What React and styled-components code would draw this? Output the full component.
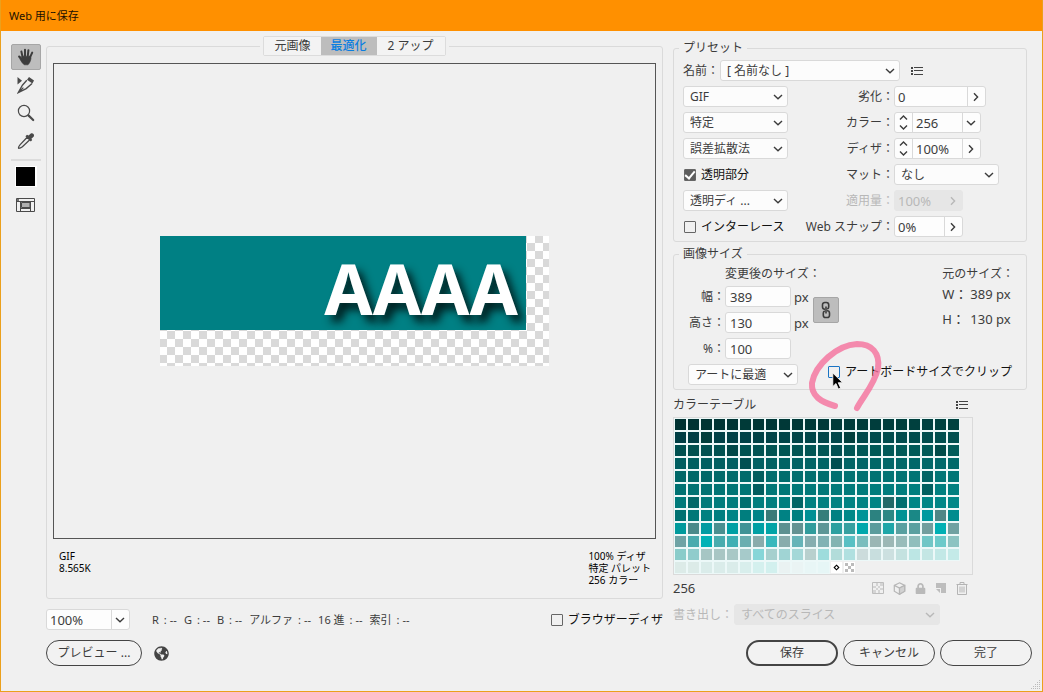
import React, { useState } from "react";
import styled, { createGlobalStyle } from "styled-components";
import { FaGlobeAmericas, FaLock } from "react-icons/fa";

const rampRows = [
  { from: [0, 50, 50], to: [0, 66, 64], odd: { 5: "#003a38" } },
  { from: [0, 62, 68], to: [0, 80, 80], odd: { 2: "#003f3c", 13: "#00403e" } },
  { from: [0, 80, 80], to: [0, 92, 90], odd: { 4: "#004848", 12: "#005052", 20: "#004c4a" } },
  { from: [0, 94, 96], to: [0, 106, 106], odd: { 5: "#005052", 12: "#005052" } },
  { from: [0, 104, 104], to: [0, 118, 118], odd: { 6: "#005e5e", 19: "#006464" } },
  { from: [0, 114, 114], to: [0, 128, 128], odd: { 6: "#005c5e", 19: "#006060" } },
  { from: [0, 122, 122], to: [0, 136, 136], odd: { 1: "#006868", 5: "#007070", 9: "#006666", 16: "#226a68", 17: "#007070" } },
];

const tailRows = [
  "007171 007878 008080 007e80 008486 007e7e 008488 3a7a78 008284 008080 009094 357e7a 008082 008888 009498 2c8280 2c8884 009294 1a8886 00999e 4f8686 008c8e",
  "009a9c 4a8a8a 009ca2 4a9090 00a0a4 3f9396 00a0a4 00a4a6 5c9090 629292 309c9c 5c9696 2ca0a0 36a0a0 00a8ac 5a9c9c 1ea6a8 58a0a0 5aa0a0 729e9e 00b0b4 70a2a2",
  "6fa3a5 4aabae 00b2b6 48acae 40b0b4 6aaeb0 88acac 38b8bc 88acac 66b4b8 86aeb0 80b2b4 82b4b2 58c0c4 7abebe 9ab6b4 9cb8b6 98bcba 90bebc 70c6c6 6ccaca 8cc4c2",
  "8accca 90cccc a6c6c4 a8c6c4 a8c8c6 a6caca 86d6d8 a6d0ce a0d4d4 a4d8d8 b8d0ce 9edcdc b2dcda b0e0e0 ccdcdc c8dede cce0e0 c4e2e0 bce6e4 c4e6e4 c2e8e6 c4eae8",
  "dcebe8 dcebe8 daecea daecea daecea d8eeec d4f0ee d2f0ee eaf2f2 eaf4f4 e8f6f6 e6f6f6",
];

const ramp = ({ from, to, odd }) =>
  Array.from({ length: 22 }, (_, i) => {
    if (odd[i]) return odd[i];
    const c = from.map((v, k) => Math.round(v + ((to[k] - v) * i) / 21));
    return `rgb(${c.join(",")})`;
  });

const swatches = [
  ...rampRows.flatMap(ramp),
  ...tailRows.flatMap((row) => row.split(" ").map((c) => "#" + c)),
];

const readout = ["R", "G", "B", "アルファ", "16 進", "索引"];

/* ---------- icons ---------- */

const Chevron = ({ dir = "down" }) => {
  const d = { down: "M1 3l4 3.8 4-3.800", right: "M3 1.200l3.600 3.800-3.600 3.800" }[dir];
  return (
    <svg width="10" height="10" viewBox="0 0 10 10" fill="none" stroke="currentColor" strokeWidth="1.4">
      <path d={d} />
    </svg>
  );
};

const HandIcon = () => (
  <svg width="18" height="18" viewBox="0 0 18 18" fill="none" stroke="#3c3c3c" strokeLinecap="round">
    <path d="M5.600 9L4.400 3.600M8 8V1.800M10.800 8l.6-5.800M13 9.400l2.200-4.800" strokeWidth="2" />
    <path d="M6 12L2.200 8.600" strokeWidth="2.2" />
    <path d="M5 8.200h8.600l.4 2.200c-.4 2.800-1.400 4.600-3 6.400H7.200C5.400 15.200 4 13.200 2.600 10.400l2.600 1z" fill="#3c3c3c" strokeWidth=".6" />
  </svg>
);

const SliceIcon = () => (
  <svg width="18" height="18" viewBox="0 0 18 18" fill="none" stroke="#4a4a4a">
    <path d="M.5 1v7.500l4.500-3.700z" fill="#4a4a4a" stroke="none" />
    <path d="M12 1l5 3.400-1.600 3.200-5.400-3.800z" fill="#4a4a4a" stroke="none" />
    <path d="M9.800 4.200L5.400 9.200 1.200 16.600l8-4 5.800-5.200M1.200 16.600l5.200-5" strokeWidth="1.3" />
  </svg>
);

const ZoomIcon = () => (
  <svg width="18" height="18" viewBox="0 0 18 18" fill="none" stroke="#4a4a4a">
    <circle cx="7" cy="7" r="5.6" strokeWidth="1.2" />
    <path d="M11.400 11.400l4.800 4.600" strokeWidth="2.2" strokeLinecap="round" />
  </svg>
);

const DropperIcon = () => (
  <svg width="18" height="18" viewBox="0 0 18 18" fill="none" stroke="#4a4a4a">
    <path d="M10.200 5.200l2.600 2.600-7.400 7c-1.200 1-2.600 1.600-3.600 1.600-.6-.6.200-2.400 1.400-3.800z" strokeWidth="1.3" />
    <path d="M8.400 4.200l5.400 5.200 1.400-1.400-.8-1.200 2.400-2.400c1-1.800-1-4-3-3L11.600 3.600l-1.600-.8z" fill="#4a4a4a" stroke="none" />
  </svg>
);

const SliceViewIcon = () => (
  <svg width="20" height="16" viewBox="0 0 20 16" fill="none" stroke="#4a4a4a">
    <path d="M.5 1.500h18v13H.5zM.5 4.500h18M4.500 4.500v10M14.500 4.500v10M4.500 11.500h10" />
    <path d="M5.500 5.500h8.500v5H5.500z" fill="#b0b0b0" />
    <path d="M1 3h2" strokeWidth="1.6" />
  </svg>
);

const ListIcon = () => (
  <svg width="12" height="10" viewBox="0 0 12 10" fill="#444">
    <path d="M0 1h2v2H0zM0 4h2v2H0zM0 7h2v2H0zM3 1h9v1H3zM3 4h9v1H3zM3 8h9v1H3z" />
  </svg>
);

const LinkIcon = () => (
  <svg width="12" height="18" viewBox="0 0 12 18" fill="none" stroke="#3c3c3c" strokeWidth="1.6">
    <path d="M5 8.200H4.800A2.300 2.300 0 0 1 2.500 6V3.800a2.300 2.300 0 0 1 2.300-2.300h1.600a2.300 2.300 0 0 1 2.300 2.300V6c0 1-.6 1.800-1.500 2.100" />
    <path d="M7 9.800h.2a2.300 2.300 0 0 1 2.300 2.200v2.200a2.300 2.300 0 0 1-2.300 2.300H5.600a2.300 2.300 0 0 1-2.300-2.300V12c0-1 .6-1.800 1.500-2.100" />
    <path d="M6 5.500v7" />
  </svg>
);

const CheckerIcon = () => (
  <svg width="12" height="12" viewBox="0 0 12 12" fill="#d4d4d4">
    <path d="M.5.5h11v11H.5z" fill="none" stroke="#bdbdbd" />
    <path d="M4 1h2v3H4zM8 1h3v3H8zM1 4h3v2H1zM6 4h2v2H6zM4 6h2v2H4zM8 6h3v2H8zM1 8h3v3H1zM6 8h2v3H6z" />
  </svg>
);

const CubeIcon = () => (
  <svg width="13" height="13" viewBox="0 0 13 13" fill="none" stroke="#b6b6b6" strokeWidth="1.2">
    <path d="M6.500.8l5.200 2.600v5.800l-5.200 3-5.200-3V3.400z" />
    <path d="M1.300 3.400l5.200 2.700 5.200-2.700M6.500 6v6.200" />
    <path d="M6.500 6l5.200-2.600v5.800l-5.200 3z" fill="#d2d2d2" />
  </svg>
);

const NewIcon = () => (
  <svg width="12" height="12" viewBox="0 0 12 12" fill="#bdbdbd">
    <path d="M1 1h10v10H6V6H1zM1 7h4v4z" />
  </svg>
);

const TrashIcon = () => (
  <svg width="12" height="13" viewBox="0 0 12 13" fill="none" stroke="#b4b4b4">
    <path d="M.5 2.500h11M4 2.500v-2h4v2M1.500 2.500v10h9v-10M4 4.500v6M6 4.500v6M8 4.500v6" />
  </svg>
);

/* ---------- base ---------- */

const GlobalStyle = createGlobalStyle`
  * {
    box-sizing: border-box;
  }
  body {
    margin: 0;
    background: #f0f0f0;
  }
  body, button, input, select {
    font-family: "Noto Sans", "Noto Sans CJK JP", sans-serif;
    font-size: 12px;
    line-height: 14px;
    color: #3c3c3c;
  }
`;

const Dialog = styled.div`
  position: relative;
  display: flex;
  flex-direction: column;
  min-height: 100vh;
  border: 1px solid #eba01c;
  border-top: none;
`;

const TitleBar = styled.header`
  display: flex;
  align-items: center;
  height: 31px;
  padding: 0 8px;
  background: #ff9000;
`;

const Title = styled.h1`
  margin: 0;
  font-size: 11px;
  font-weight: 400;
  color: #1c1000;
`;

const Body = styled.div`
  display: flex;
  flex: 1;
  padding: 5px 15px 10px 10px;
`;

const Tools = styled.nav`
  display: flex;
  flex-direction: column;
  align-items: center;
  gap: 2px;
  width: 30px;
  margin: 8px 5px 0 0;
`;

const ToolButton = styled.button`
  display: flex;
  align-items: center;
  justify-content: center;
  width: 30px;
  height: 26px;
  padding: 0;
  border: 1px solid ${(p) => (p.$active ? "#a6a6a6" : "transparent")};
  border-radius: 2px;
  background: ${(p) => (p.$active ? "#bdbdbd" : "none")};
`;

const ToolRule = styled.hr`
  width: 30px;
  height: 2px;
  margin: 3px 0;
  border: none;
  background: #dcdcdc;
`;

const Swatch = styled.button`
  width: 22px;
  height: 21px;
  margin-bottom: 3px;
  padding: 0;
  border: solid #fff;
  border-width: 1px 2px 1px 1px;
  background: #000;
`;

const Frame = styled.fieldset`
  min-width: 0;
  margin: 0;
  padding: 0 5px;
  border: 1px solid #dadada;
  border-radius: 3px;
`;

const Legend = styled.legend`
  height: 14px;
  padding: 0 4px;
`;

/* ---------- preview side ---------- */

const Main = styled.main`
  display: flex;
  flex: 1;
  flex-direction: column;
  min-width: 0;
`;

const PreviewFrame = styled(Frame)`
  display: flex;
  flex: 1;
  flex-direction: column;
  padding: 7px 6px 12px;
`;

const TabLegend = styled.legend`
  height: 20px;
  margin: 0 auto;
  padding: 0 3px;
`;

const Tabs = styled.div`
  display: flex;
  height: 20px;
  border: 1px solid #dcdcdc;
  border-radius: 2px;
`;

const Tab = styled.button`
  padding: 0 ${(p) => (p.$wide ? 11 : 10)}px;
  border: none;
  background: ${(p) => (p.$active ? "#bdbdbd" : "#f3f3f3")};
  color: ${(p) => (p.$active ? "#0a7ee0" : "#3c3c3c")};
  font-weight: ${(p) => (p.$active ? 500 : 400)};
`;

const Canvas = styled.div`
  display: flex;
  flex: 1;
  align-items: center;
  justify-content: center;
  border: 1px solid #555;
`;

const Artwork = styled.div`
  width: 389px;
  height: 130px;
  background: repeating-conic-gradient(#d9d9d9 0 25%, #fff 0 50%) -1px -1px / 16px 16px;
`;

const Banner = styled.div`
  display: flex;
  align-items: center;
  justify-content: flex-end;
  width: 366px;
  height: 94px;
  padding: 10px 8px 0 0;
  clip-path: inset(0);
  background: #008084;
  color: #fff;
  font-size: 70px;
  font-weight: 700;
  line-height: 80px;
  text-shadow: 6px 7px 8px rgba(0, 20, 20, 0.9);
`;

const PreviewInfo = styled.div`
  display: flex;
  justify-content: space-between;
  padding: 11px 5px 0 6px;
  font-size: 10px;
  line-height: 12px;
  color: #000;
`;

const InfoBlock = styled.div`
  display: flex;
  flex-direction: column;
  min-height: 36px;
`;

const StatusRow = styled.div`
  display: flex;
  align-items: center;
  margin-top: 10px;
`;

const Readout = styled.div`
  display: flex;
  flex: 1;
  gap: 7px;
  margin-left: 22px;
  font-size: 11px;
`;

const ReadoutItem = styled.span`
  display: flex;
  gap: 5px;
`;

const ReadoutValue = styled.span`
  display: flex;
  gap: 3px;
`;

/* ---------- controls ---------- */

const SelectBox = styled.span`
  display: grid;
  align-items: center;
  width: ${(p) => p.$w};
  height: 21px;
  color: ${(p) => (p.$off ? "#b8b8b8" : "#3c3c3c")};
  svg {
    grid-area: 1 / 1;
    justify-self: end;
    margin-right: 5px;
    pointer-events: none;
  }
`;

const NativeSelect = styled.select`
  grid-area: 1 / 1;
  width: 100%;
  height: 21px;
  padding: 0 18px 0 6px;
  border: 1px solid ${(p) => (p.disabled ? "#e6e6e6" : "#d9d9d9")};
  border-radius: 3px;
  background: ${(p) => (p.disabled ? "#e6e6e6" : "#fcfcfc")};
  color: inherit;
  opacity: 1;
  appearance: none;
`;

const Select = ({ label, id, value, w, disabled }) => (
  <SelectBox $w={w} $off={disabled}>
    <NativeSelect id={id} aria-label={label} disabled={disabled}>
      <option>{value}</option>
    </NativeSelect>
    <Chevron />
  </SelectBox>
);

const ComboBox = styled.span`
  display: flex;
  width: ${(p) => p.$w};
  height: 21px;
  border: 1px solid ${(p) => (p.$off ? "#e6e6e6" : "#d9d9d9")};
  border-radius: 3px;
  overflow: hidden;
  background: ${(p) => (p.$off ? "#e6e6e6" : "#fdfdfd")};
  color: ${(p) => (p.$off ? "#b8b8b8" : "#3c3c3c")};
`;

const ComboInput = styled.input`
  flex: 1;
  min-width: 0;
  padding: 0 3px;
  border: none;
  background: transparent;
  font-size: 13px;
  color: inherit;
`;

const ComboButton = styled.button`
  display: flex;
  align-items: center;
  justify-content: center;
  width: 18px;
  padding: 0 2px 0 0;
  border: none;
  border-left: 1px solid ${(p) => (p.disabled ? "transparent" : "#d9d9d9")};
  background: transparent;
  color: inherit;
`;

const Stepper = styled.span`
  display: flex;
  flex-direction: column;
  width: 18px;
  border-right: 1px solid #d9d9d9;
`;

const StepButton = styled.button`
  display: flex;
  flex: 1;
  align-items: center;
  justify-content: center;
  padding: 0;
  border: none;
  background: none;
  color: inherit;
`;

const Combo = ({ id, label, value, w, dir, stepper, disabled }) => (
  <ComboBox $w={w} $off={disabled}>
    {stepper && (
      <Stepper>
        <StepButton aria-label="増やす">
          <svg width="9" height="5" viewBox="0 0 9 5" fill="none" stroke="currentColor" strokeWidth="1.4">
            <path d="M1 4.500L4.500 1 8 4.500" />
          </svg>
        </StepButton>
        <StepButton aria-label="減らす">
          <svg width="9" height="5" viewBox="0 0 9 5" fill="none" stroke="currentColor" strokeWidth="1.4">
            <path d="M1 .5L4.500 4 8 .5" />
          </svg>
        </StepButton>
      </Stepper>
    )}
    <ComboInput id={id} aria-label={label} defaultValue={value} disabled={disabled} />
    <ComboButton aria-label="一覧" disabled={disabled}>
      <Chevron dir={dir} />
    </ComboButton>
  </ComboBox>
);

const CheckLabel = styled.label`
  position: relative;
  display: flex;
  align-items: center;
  gap: 5px;
  padding-left: 1px;
  color: #111;
  white-space: nowrap;
`;

const Check = styled.input`
  display: grid;
  place-content: center;
  width: 12px;
  height: 12px;
  margin: 0;
  border: 1px solid ${(p) => (p.$hover ? "#1a74c4" : "#666")};
  border-radius: 1px;
  appearance: none;
  &:checked {
    background: #5c5c5c;
  }
  &:checked::after {
    content: "";
    width: 4px;
    height: 8px;
    margin-bottom: 2px;
    border: solid #fff;
    border-width: 0 2px 2px 0;
    transform: rotate(40deg);
  }
`;

const IconButton = styled.button`
  display: flex;
  padding: 0;
  border: none;
  background: none;
  color: #b9b9b9;
`;

/* ---------- settings side ---------- */

const Side = styled.aside`
  display: flex;
  flex-direction: column;
  width: 354px;
  margin-left: 10px;
  padding-top: 5px;
`;

const NameRow = styled.div`
  display: flex;
  align-items: center;
  gap: 1px;
  padding: 5px 4px 0;
  button {
    margin-left: 10px;
  }
`;

const PresetGrid = styled.div`
  display: grid;
  grid-template-columns: 105px 106px 1fr;
  grid-auto-rows: 21px;
  row-gap: 5px;
  align-items: center;
  padding: 5px 4px 4px;
`;

const FieldLabel = styled.label`
  text-align: right;
  white-space: nowrap;
  color: ${(p) => (p.$off ? "#b8b8b8" : "#3c3c3c")};
`;

const SizeFrame = styled(Frame)`
  margin-top: 5px;
`;

const SizeTop = styled.div`
  display: flex;
  justify-content: space-between;
  padding: 0 7px 0 4px;
`;

const SizeGrid = styled.div`
  display: grid;
  grid-template-columns: 39px 66px 16px 26px;
  grid-template-rows: 20px repeat(3, 21px);
  gap: 5px 3px;
  align-items: center;
  ${FieldLabel} {
    margin-right: -3px;
  }
`;

const SizeHeading = styled.div`
  grid-column: 2 / -1;
  align-self: end;
  white-space: nowrap;
`;

const SizeInput = styled.input`
  width: 66px;
  height: 21px;
  padding: 0 4px;
  border: 1px solid #d9d9d9;
  border-radius: 3px;
  background: #fdfdfd;
  font-size: 13px;
`;

const Unit = styled.span`
  font-size: 13px;
`;

const LinkButton = styled.button`
  display: flex;
  grid-area: 2 / 4 / 4 / 5;
  align-items: center;
  justify-content: center;
  width: 26px;
  height: 26px;
  padding: 0;
  border: 1px solid #a6a6a6;
  border-radius: 2px;
  background: #bdbdbd;
`;

const Original = styled.dl`
  display: grid;
  grid-template-columns: 28px auto;
  grid-template-rows: 20px 16px 24px;
  row-gap: 5px;
  align-content: start;
  align-items: center;
  margin: 0;
  font-size: 13px;
  dt {
    white-space: nowrap;
  }
  dd {
    margin: 0;
  }
`;

const OriginalHeading = styled.dt`
  grid-column: 1 / -1;
  align-self: end;
  font-size: 12px;
`;

const SizeBottom = styled.div`
  display: flex;
  align-items: flex-start;
  justify-content: space-between;
  padding: 5px 9px 4px;
  > label {
    margin-top: 1px;
  }
`;

const Scribble = styled.svg`
  position: absolute;
  top: -29px;
  left: -23px;
  pointer-events: none;
`;

const Pointer = styled.svg`
  position: absolute;
  top: 7px;
  left: 5px;
  pointer-events: none;
`;

const TableHead = styled.div`
  display: flex;
  align-items: center;
  justify-content: space-between;
  width: 295px;
  margin: 8px 0 5px;
`;

const ColorTable = styled.div`
  display: grid;
  grid-template-columns: repeat(22, 11px);
  grid-auto-rows: 11px;
  gap: 2px;
  width: 300px;
  padding: 1px;
  border: 1px solid #dadada;
`;

const Cell = styled.span`
  background: ${(p) => p.color};
  box-shadow: 0 0 0 1px #ecf8f8;
`;

const TableFoot = styled(TableHead)`
  margin: 6px 0 9px;
  font-size: 13px;
`;

const TableTools = styled.div`
  display: flex;
  align-items: center;
  gap: 9px;
`;

const ExportRow = styled.div`
  display: flex;
  align-items: center;
  gap: 1px;
`;

/* ---------- footer ---------- */

const Footer = styled.footer`
  display: flex;
  align-items: center;
  gap: 5px;
  padding: 0 10px 25px 45px;
`;

const PillButton = styled.button`
  width: ${(p) => p.$w || "92px"};
  height: 26px;
  padding: 0;
  border: ${(p) => (p.$primary ? 2 : 1)}px solid #444;
  border-radius: 13px;
  background: #f2f2f2;
`;

const GlobeButton = styled(IconButton)`
  margin: 0 auto 0 7px;
  color: #444;
`;

const Grip = styled.svg`
  position: absolute;
  right: 1px;
  bottom: 1px;
`;

export default function App() {
  const [tab, setTab] = useState("最適化");
  const [tool, setTool] = useState("hand");

  const tools = [
    ["hand", "手のひら", <HandIcon />],
    ["slice", "スライス選択", <SliceIcon />],
    ["zoom", "ズーム", <ZoomIcon />],
    ["dropper", "スポイト", <DropperIcon />],
  ];

  return (
    <Dialog>
      <GlobalStyle />
      <TitleBar>
        <Title>Web 用に保存</Title>
      </TitleBar>
      <Body>
        <Tools>
          {tools.map(([key, label, icon]) => (
            <ToolButton key={key} aria-label={label} $active={tool === key} onClick={() => setTool(key)}>
              {icon}
            </ToolButton>
          ))}
          <ToolRule />
          <Swatch aria-label="スポイトカラー" />
          <ToolButton aria-label="スライスの表示">
            <SliceViewIcon />
          </ToolButton>
        </Tools>

        <Main>
          <PreviewFrame>
            <TabLegend>
              <Tabs>
                {["元画像", "最適化", "2 アップ"].map((t) => (
                  <Tab key={t} $active={tab === t} $wide={t === "2 アップ"} onClick={() => setTab(t)}>
                    {t}
                  </Tab>
                ))}
              </Tabs>
            </TabLegend>
            <Canvas>
              <Artwork>
                <Banner>AAAA</Banner>
              </Artwork>
            </Canvas>
            <PreviewInfo>
              <InfoBlock>
                <span>GIF</span>
                <span>8.565K</span>
              </InfoBlock>
              <InfoBlock>
                <span>100% ディザ</span>
                <span>特定 パレット</span>
                <span>256 カラー</span>
              </InfoBlock>
            </PreviewInfo>
          </PreviewFrame>
          <StatusRow>
            <Combo label="ズームレベル" value="100%" w="84px" dir="down" />
            <Readout>
              {readout.map((name) => (
                <ReadoutItem key={name}>
                  {name}
                  <ReadoutValue>
                    <span>:</span>
                    <span>--</span>
                  </ReadoutValue>
                </ReadoutItem>
              ))}
            </Readout>
            <CheckLabel>
              <Check type="checkbox" />
              ブラウザーディザ
            </CheckLabel>
          </StatusRow>
        </Main>

        <Side>
          <Frame>
            <Legend>プリセット</Legend>
            <NameRow>
              <FieldLabel htmlFor="preset">名前：</FieldLabel>
              <Select id="preset" value="[ 名前なし ]" w="180px" />
              <IconButton aria-label="プリセットメニュー">
                <ListIcon />
              </IconButton>
            </NameRow>
            <PresetGrid>
              <Select label="ファイル形式" value="GIF" w="105px" />
              <FieldLabel htmlFor="lossy">劣化：</FieldLabel>
              <Combo id="lossy" value="0" w="92px" dir="right" />

              <Select label="減色アルゴリズム" value="特定" w="105px" />
              <FieldLabel htmlFor="colors">カラー：</FieldLabel>
              <Combo id="colors" value="256" w="87px" dir="down" stepper />

              <Select label="ディザアルゴリズム" value="誤差拡散法" w="105px" />
              <FieldLabel htmlFor="dither">ディザ：</FieldLabel>
              <Combo id="dither" value="100%" w="87px" dir="right" stepper />

              <CheckLabel>
                <Check type="checkbox" defaultChecked />
                透明部分
              </CheckLabel>
              <FieldLabel htmlFor="matte">マット：</FieldLabel>
              <Select id="matte" value="なし" w="105px" />

              <Select label="透明ディザ" value="透明ディ ..." w="105px" />
              <FieldLabel htmlFor="amount" $off>適用量：</FieldLabel>
              <Combo id="amount" value="100%" w="69px" dir="right" disabled />

              <CheckLabel>
                <Check type="checkbox" />
                インターレース
              </CheckLabel>
              <FieldLabel htmlFor="snap">Web スナップ：</FieldLabel>
              <Combo id="snap" value="0%" w="69px" dir="right" />
            </PresetGrid>
          </Frame>

          <SizeFrame>
            <Legend>画像サイズ</Legend>
            <SizeTop>
              <SizeGrid>
                <SizeHeading>変更後のサイズ：</SizeHeading>
                <FieldLabel htmlFor="width">幅：</FieldLabel>
                <SizeInput id="width" defaultValue="389" />
                <Unit>px</Unit>
                <LinkButton aria-label="縦横比を固定">
                  <LinkIcon />
                </LinkButton>
                <FieldLabel htmlFor="height">高さ：</FieldLabel>
                <SizeInput id="height" defaultValue="130" />
                <Unit>px</Unit>
                <FieldLabel htmlFor="percent">%：</FieldLabel>
                <SizeInput id="percent" defaultValue="100" />
              </SizeGrid>
              <Original>
                <OriginalHeading>元のサイズ：</OriginalHeading>
                <dt>W：</dt>
                <dd>389 px</dd>
                <dt>H：</dt>
                <dd>130 px</dd>
              </Original>
            </SizeTop>
            <SizeBottom>
              <Select label="画質" value="アートに最適" w="110px" />
              <CheckLabel>
                <Check type="checkbox" $hover />
                アートボードサイズでクリップ
                <Scribble width="80" height="80" viewBox="805 337 80 80" fill="none">
                  <path
                    d="M836 407C822 403 812 397 813 384C816 366 838 346 858 345C873 345 881 354 879 369C876 385 863 399 858 409"
                    stroke="#f5709c"
                    strokeOpacity="0.8"
                    strokeWidth="6"
                    strokeLinecap="round"
                  />
                </Scribble>
                <Pointer width="12" height="19" viewBox="0 0 12 19">
                  <path d="M.8 1v13.500l3.200-3 2.400 5.500 2.200-1-2.400-5.300h4.400z" fill="#000" stroke="#fff" strokeWidth=".8" />
                </Pointer>
              </CheckLabel>
            </SizeBottom>
          </SizeFrame>

          <TableHead>
            カラーテーブル
            <IconButton aria-label="カラーテーブルメニュー">
              <ListIcon />
            </IconButton>
          </TableHead>
          <ColorTable>
            {swatches.map((c, i) => (
              <Cell key={i} color={c} />
            ))}
            <svg width="11" height="11" viewBox="0 0 11 11">
              <path d="M0 0h11v11H0z" fill="#fff" />
              <path d="M5.500 3.200l2.300 2.300-2.300 2.300-2.300-2.300z" fill="none" stroke="#000" strokeWidth="1.1" />
            </svg>
            <svg width="11" height="11" viewBox="0 0 11 11">
              <path d="M0 0h11v11H0z" fill="#fff" />
              <path d="M1 1h3v3H1zM7 1h3v3H7zM4 4h3v3H4zM1 7h3v3H1zM7 7h3v3H7z" fill="#bbb" />
            </svg>
          </ColorTable>
          <TableFoot>
            256
            <TableTools>
              <IconButton aria-label="透明にする" disabled><CheckerIcon /></IconButton>
              <IconButton aria-label="Web カラーにシフト" disabled><CubeIcon /></IconButton>
              <IconButton aria-label="ロック" disabled><FaLock size={11} /></IconButton>
              <IconButton aria-label="新規カラー" disabled><NewIcon /></IconButton>
              <IconButton aria-label="削除" disabled><TrashIcon /></IconButton>
            </TableTools>
          </TableFoot>
          <ExportRow>
            <FieldLabel htmlFor="export" $off>書き出し：</FieldLabel>
            <Select id="export" value="すべてのスライス" w="206px" disabled />
          </ExportRow>
        </Side>
      </Body>

      <Footer>
        <PillButton $w="96px">プレビュー ...</PillButton>
        <GlobeButton aria-label="ブラウザーでプレビュー">
          <FaGlobeAmericas size={15} />
        </GlobeButton>
        <PillButton $primary>保存</PillButton>
        <PillButton>キャンセル</PillButton>
        <PillButton>完了</PillButton>
      </Footer>

      <Grip width="10" height="10" viewBox="0 0 10 10" fill="#bbb">
        <path d="M8 0h1v1H8zM6 2h1v1H6zM8 2h1v1H8zM4 4h1v1H4zM6 4h1v1H6zM8 4h1v1H8zM2 6h1v1H2zM4 6h1v1H4zM6 6h1v1H6zM8 6h1v1H8zM0 8h1v1H0zM2 8h1v1H2zM4 8h1v1H4zM6 8h1v1H6zM8 8h1v1H8z" />
      </Grip>
    </Dialog>
  );
}
